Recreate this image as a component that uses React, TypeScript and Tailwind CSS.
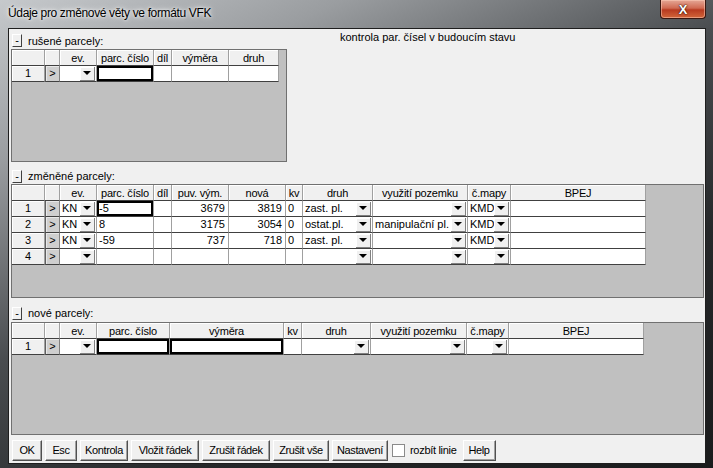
import React from "react";

type Col = { w: string; label: string; kind: "text" | "num" | "dd" };

const font = "font-['Liberation_Sans',Tahoma,sans-serif]";

const cols1: Col[] = [
  { w: "w-[37px]", label: "ev.", kind: "dd" },
  { w: "w-[57px]", label: "parc. číslo", kind: "text" },
  { w: "w-[18px]", label: "díl", kind: "text" },
  { w: "w-[57px]", label: "výměra", kind: "text" },
  { w: "w-[50px]", label: "druh", kind: "text" },
];

const cols2: Col[] = [
  { w: "w-[37px]", label: "ev.", kind: "dd" },
  { w: "w-[57px]", label: "parc. číslo", kind: "text" },
  { w: "w-[18px]", label: "díl", kind: "text" },
  { w: "w-[57px]", label: "puv. vým.", kind: "num" },
  { w: "w-[57px]", label: "nová", kind: "num" },
  { w: "w-[17px]", label: "kv", kind: "text" },
  { w: "w-[70px]", label: "druh", kind: "dd" },
  { w: "w-[95px]", label: "využití pozemku", kind: "dd" },
  { w: "w-[43px]", label: "č.mapy", kind: "dd" },
  { w: "w-[135px]", label: "BPEJ", kind: "text" },
];

const cols3: Col[] = [
  { w: "w-[37px]", label: "ev.", kind: "dd" },
  { w: "w-[73px]", label: "parc. číslo", kind: "text" },
  { w: "w-[114px]", label: "výměra", kind: "text" },
  { w: "w-[18px]", label: "kv", kind: "text" },
  { w: "w-[69px]", label: "druh", kind: "dd" },
  { w: "w-[96px]", label: "využití pozemku", kind: "dd" },
  { w: "w-[42px]", label: "č.mapy", kind: "dd" },
  { w: "w-[135px]", label: "BPEJ", kind: "text" },
];

const rows2 = [
  ["KN", "-5", "", "3679", "3819", "0", "zast. pl.", "", "KMD", ""],
  ["KN", "8", "", "3175", "3054", "0", "ostat.pl.", "manipulační pl.", "KMD", ""],
  ["KN", "-59", "", "737", "718", "0", "zast. pl.", "", "KMD", ""],
  ["", "", "", "", "", "", "", "", "", ""],
];

function DropBtn() {
  return (
    <div className="w-[15px] h-[14px] mr-[1px] shrink-0 bg-[#f0f0f0] border-r border-b border-[#808080] shadow-[inset_1px_1px_0_#ffffff] flex items-center justify-center">
      <div className="w-0 h-0 border-l-[4px] border-r-[4px] border-t-[4px] border-l-transparent border-r-transparent border-t-black" />
    </div>
  );
}

function HeadCell({ w, label }: { w: string; label: string }) {
  return (
    <div
      className={`${w} h-[16px] shrink-0 bg-[#f0f0f0] border-r border-b border-r-[#a0a0a0] border-b-[#404040] shadow-[inset_1px_1px_0_#ffffff] flex items-end justify-center text-[11px] leading-[14px] tracking-[-0.2px] text-black overflow-hidden whitespace-nowrap`}
    >
      {label}
    </div>
  );
}

function DataCell({ col, value, active }: { col: Col; value: string; active?: boolean }) {
  const align =
    col.kind === "num" ? "justify-end pr-[3px]" : col.kind === "dd" ? "justify-between pl-[2px]" : "pl-[2px]";
  return (
    <div
      className={`${col.w} h-[16px] shrink-0 bg-white border-r border-b border-r-[#a0a0a0] border-b-[#404040] flex items-center ${align} text-[11px] leading-none whitespace-nowrap overflow-hidden ${
        active ? "shadow-[inset_0_0_0_2px_#000000]" : ""
      }`}
    >
      {col.kind === "dd" ? (
        <>
          <span>{value}</span>
          <DropBtn />
        </>
      ) : (
        value
      )}
    </div>
  );
}

function Grid({
  cols,
  rows,
  active,
  size,
}: {
  cols: Col[];
  rows: string[][];
  active: number[];
  size: string;
}) {
  return (
    <div className={`${size} bg-[#c0c0c0] border border-[#707070]`}>
      <div className="flex">
        <HeadCell w="w-[33px]" label="" />
        <HeadCell w="w-[15px]" label="" />
        {cols.map((c) => (
          <HeadCell key={c.label} w={c.w} label={c.label} />
        ))}
      </div>
      {rows.map((r, i) => (
        <div className="flex" key={i}>
          <div className="w-[33px] h-[16px] shrink-0 bg-[#f0f0f0] border-r border-b border-r-[#a0a0a0] border-b-[#404040] shadow-[inset_1px_1px_0_#ffffff] flex items-center justify-center text-[11px] leading-none">
            {i + 1}
          </div>
          <div className="w-[15px] h-[16px] shrink-0 bg-[#cfcfcf] border-l border-r border-b border-l-[#606060] border-r-[#808080] border-b-[#404040] shadow-[inset_1px_1px_0_#e8e8e8] flex items-center justify-center text-[11px] leading-none">
            &gt;
          </div>
          {cols.map((c, j) => (
            <DataCell key={j} col={c} value={r[j]} active={i === 0 && active.includes(j)} />
          ))}
        </div>
      ))}
    </div>
  );
}

function Minus() {
  return (
    <div className="w-[10px] h-[13px] bg-[#f0f0f0] border border-t-white border-l-white border-r-[#404040] border-b-[#404040] flex items-center justify-center text-[11px] leading-none">
      -
    </div>
  );
}

function Btn({ w, label }: { w: string; label: string }) {
  return (
    <div
      className={`${w} h-[21px] shrink-0 bg-[#f0f0f0] border border-t-white border-l-white border-r-[#505050] border-b-[#505050] shadow-[inset_-1px_-1px_0_#a0a0a0] flex items-center justify-center text-[11px] leading-none tracking-[-0.4px] whitespace-nowrap`}
    >
      {label}
    </div>
  );
}

export default function App() {
  return (
    <div
      className={`${font} w-[713px] h-[468px] flex flex-col bg-[linear-gradient(155deg,#c6c9cc_0%,#9a9da0_20%,#4a4d50_45%,#26282a_70%,#1a1b1c_100%)] text-black overflow-hidden`}
    >
      {/* title bar */}
      <div className="h-[28px] shrink-0 flex items-start justify-between">
        <div className="pl-[8px] pt-[7px] text-[12px] leading-none tracking-[-0.35px] text-black [text-shadow:0_0_6px_#ffffff,0_0_3px_#ffffff]">
          Údaje pro změnové věty ve formátu VFK
        </div>
        <div className="mr-[7px] w-[46px] h-[19px] rounded-b-[4px] border border-t-0 border-[#3a1710] bg-[linear-gradient(to_bottom,#e5a796_0%,#d06a52_45%,#b83a20_55%,#d2663a_100%)] shadow-[inset_0_0_0_1px_rgba(255,210,190,0.5)] flex items-center justify-center">
          <span className="text-white font-bold text-[13px] leading-none [text-shadow:0_0_2px_#3a1000,0_0_1px_#000]">
            X
          </span>
        </div>
      </div>

      <div className="flex flex-1">
        <div className="w-[8px] shrink-0" />
        {/* client */}
        <div className="w-[698px] h-[436px] shrink-0 border border-[#1e1e1e] bg-[#f0f0f0] pl-[2px] flex flex-col">
          <div className="h-[20px] flex items-end pb-[2px] pl-[1px] gap-[6px] text-[11px] leading-none">
            <Minus />
            <span className="w-[306px]">rušené parcely:</span>
            <span className="pb-[4px]">kontrola par. čísel v budoucím stavu</span>
          </div>
          <Grid cols={cols1} rows={[["", "", "", "", ""]]} active={[1]} size="w-[276px] h-[113px]" />

          <div className="h-[22px] flex items-end pb-[1px] pl-[1px] gap-[6px] text-[11px] leading-none">
            <Minus />
            <span className="pb-[1px]">změněné parcely:</span>
          </div>
          <Grid cols={cols2} rows={rows2} active={[1]} size="w-[693px] h-[114px]" />

          <div className="h-[24px] flex items-end pb-[2px] pl-[1px] gap-[6px] text-[11px] leading-none">
            <Minus />
            <span className="pb-[1px]">nové parcely:</span>
          </div>
          <Grid
            cols={cols3}
            rows={[["", "", "", "", "", "", "", ""]]}
            active={[1, 2]}
            size="w-[693px] h-[113px]"
          />

          <div className="flex items-start gap-[3px] pt-[5px] pl-[1px]">
            <Btn w="w-[30px]" label="OK" />
            <Btn w="w-[32px]" label="Esc" />
            <Btn w="w-[48px]" label="Kontrola" />
            <Btn w="w-[68px]" label="Vložit řádek" />
            <Btn w="w-[68px]" label="Zrušit řádek" />
            <Btn w="w-[56px]" label="Zrušit vše" />
            <Btn w="w-[56px]" label="Nastavení" />
            <div className="flex items-center h-[21px] ml-[1px]">
              <div className="w-[13px] h-[13px] bg-white border border-[#8a8a8a]" />
              <span className="ml-[5px] text-[11px] leading-none tracking-[-0.3px]">rozbít linie</span>
            </div>
            <Btn w="w-[33px] ml-[3px]" label="Help" />
          </div>
        </div>
      </div>
    </div>
  );
}
